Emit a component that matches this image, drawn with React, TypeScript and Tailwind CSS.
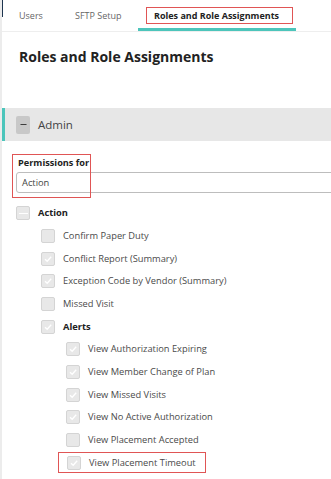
import { Minus } from "lucide-react"

type Perm = { label: string; checked: boolean; bold?: boolean; boxed?: boolean }

const actionItems: Perm[] = [
    { label: "Confirm Paper Duty", checked: false },
    { label: "Conflict Report (Summary)", checked: true },
    { label: "Exception Code by Vendor (Summary)", checked: true },
    { label: "Missed Visit", checked: false },
]

const alertItems: Perm[] = [
    { label: "View Authorization Expiring", checked: true },
    { label: "View Member Change of Plan", checked: true },
    { label: "View Missed Visits", checked: true },
    { label: "View No Active Authorization", checked: true },
    { label: "View Placement Accepted", checked: false },
    { label: "View Placement Timeout", checked: true, boxed: true },
]

function Box({ state }: { state: "on" | "off" | "mixed" }) {
    return (
        <span className="flex h-[14px] w-[14px] shrink-0 items-center justify-center rounded-[2px] border border-[#d4d4d4] bg-[#e8e8e8]">
            {state === "on" && (
                <svg width="10" height="10" viewBox="0 0 10 10" fill="none">
                    <path d="M2 5.2 L4.2 7.3 L8.2 2.8" stroke="#ffffff" strokeWidth="1.3" />
                </svg>
            )}
            {state === "mixed" && <span className="h-px w-[9px] bg-white" />}
        </span>
    )
}

function Row({ item }: { item: Perm }) {
    return (
        <div className="flex h-[22.7px] items-center">
            <div
                className={`flex items-center gap-2 ${
                    item.boxed ? "-mx-2 h-[21px] border border-[#e05555] pl-2 pr-[9px]" : ""
                }`}
            >
                <Box state={item.checked ? "on" : "off"} />
                <span className={item.bold ? "font-bold text-[#222]" : "text-[#4a4a4a]"}>
                    {item.label}
                </span>
            </div>
        </div>
    )
}

export default function App() {
    return (
        <div
            className="relative h-[479px] w-[331px] overflow-hidden border-l-2 border-[#ececec] bg-white text-[9.3px] text-[#333]"
            style={{ fontFamily: '"Open Sans", "Noto Sans", sans-serif' }}
        >
            <div className="absolute left-[-2px] top-0 h-[17px] w-[3px] bg-[#1e3550]" />

            {/* tabs */}
            <div className="flex h-[32px] items-start border-b border-[#eeeeee] text-[9px]">
                <div className="flex h-[31px] w-[56px] items-center pl-[17px] text-[#666]">Users</div>
                <div className="flex h-[31px] w-[80px] items-center pl-[17px] text-[#666]">SFTP Setup</div>
                <div className="flex h-[31px] w-[158px] items-start border-b-[3px] border-[#4cc5bb] pl-2 pt-[7px]">
                    <span className="flex h-[17px] w-[147px] items-center border border-[#e05555] pl-[7px] font-bold text-[#222]">
                        Roles and Role Assignments
                    </span>
                </div>
            </div>

            <div className="px-[17px] pt-[15px] text-[14px] font-bold leading-[20px] text-[#222]">
                Roles and Role Assignments
            </div>

            {/* admin header */}
            <div className="mt-[41px] flex h-[33px] items-center border-l-[3px] border-[#4cc5bb] bg-[#e7e7e7] pl-[11px]">
                <span className="flex h-[18px] w-[14px] items-center justify-center rounded-[2px] bg-[#c8c8c8]">
                    <Minus size={9} strokeWidth={2.5} color="#333" />
                </span>
                <span className="ml-2 text-[11.5px] text-[#444]">Admin</span>
            </div>

            {/* permissions for */}
            <div className="relative mt-[14px] pl-[14px]">
                <div className="absolute left-[10px] top-[-1px] h-[44px] w-[79px] border border-[#e05555]" />
                <div className="h-[16px] pl-[2px] text-[9.2px] font-bold leading-[16px] text-[#222]">
                    Permissions for
                </div>
                <div className="mt-[1px] flex h-[21px] w-[330px] items-center rounded-[3px] border border-[#bdbdbd] pl-[5px] text-[#444]">
                    Action
                </div>
            </div>

            {/* tree */}
            <div className="mt-[11px] pl-[14px]">
                <div className="flex h-[18px] items-center gap-2">
                    <Box state="mixed" />
                    <span className="font-bold text-[#222]">Action</span>
                </div>
                <div className="mt-[2.5px] pl-[25px]">
                    {actionItems.map((item) => (
                        <Row key={item.label} item={item} />
                    ))}
                    <Row item={{ label: "Alerts", checked: true, bold: true }} />
                    <div className="pl-[25px]">
                        {alertItems.map((item) => (
                            <Row key={item.label} item={item} />
                        ))}
                    </div>
                </div>
            </div>
        </div>
    )
}
